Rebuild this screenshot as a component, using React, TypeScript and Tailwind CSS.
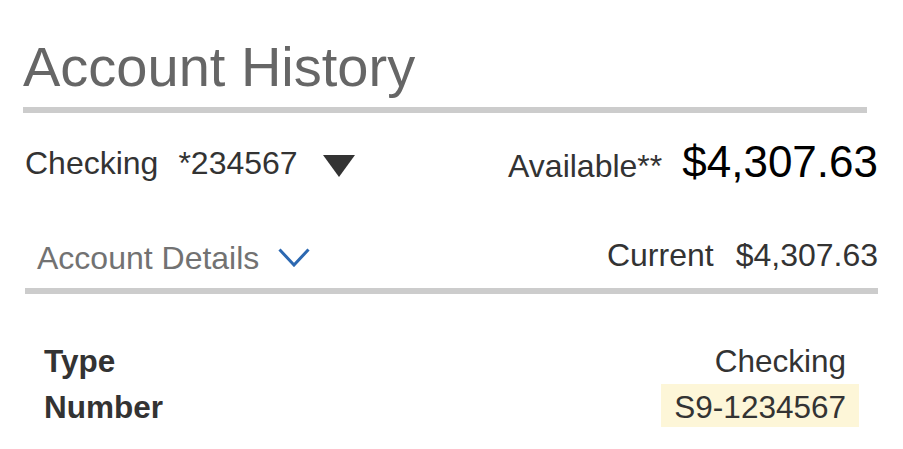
import React from 'react';

const font = { fontFamily: '"Liberation Sans", Arial, sans-serif' };

const CaretDown: React.FC = () => (
  <svg width="32" height="22" viewBox="0 0 32 22" className="block shrink-0">
    <path d="M0 0 H32 L16 22 Z" fill="#333333" />
  </svg>
);

const Chevron: React.FC = () => (
  <svg width="32" height="19" viewBox="0 0 32 19" className="block shrink-0">
    <path d="M1.5 1.5 L16 17 L30.5 1.5" fill="none" stroke="#2c68b1" strokeWidth={3} />
  </svg>
);

const DetailRow: React.FC<{ label: string; value: string; highlight?: boolean }> = ({ label, value, highlight }) => (
  <div className="flex justify-between items-start">
    <span className="text-[31.5px] leading-none pt-[7.5px] pb-[4px] font-bold text-[#333333]">{label}</span>
    <span
      className={`text-[31.5px] leading-none pt-[7.5px] pb-[4px] px-[13px] text-[#333333] ${highlight ? 'bg-[#fdf6d8]' : ''}`}
    >
      {value}
    </span>
  </div>
);

export default function App() {
  return (
    <div className="bg-white min-h-screen w-[903px] h-[449px] overflow-hidden" style={font}>
      <div className="ml-[23px] w-[855px] pt-[39px]">
        <h1 className="text-[56px] leading-none text-[#666666] font-normal">Account History</h1>
        <div className="mt-[12px] h-[6px] w-[844px] bg-[#cccccc]" />

        {/* account selector + available balance */}
        <div className="mt-[27px] flex justify-between items-start">
          <div className="mt-[7px] pl-[2px] flex items-start text-[32px] leading-none text-[#333333]">
            <span>Checking</span>
            <span className="ml-[20px]">*234567</span>
            <span className="ml-[25px] mt-[8px]">
              <CaretDown />
            </span>
          </div>
          <div className="flex items-baseline">
            <span className="text-[32px] leading-none text-[#333333]">Available**</span>
            <span className="ml-[20px] text-[44px] leading-none text-[#000000]">$4,307.63</span>
          </div>
        </div>

        {/* details toggle + current balance */}
        <div className="mt-[55px] flex justify-between items-start">
          <div className="flex items-start pl-[14px]">
            <span className="mt-[3px] text-[32px] leading-none text-[#727272]">Account Details</span>
            <span className="ml-[19px] mt-[9px]">
              <Chevron />
            </span>
          </div>
          <div className="flex items-baseline text-[32px] leading-none text-[#333333]">
            <span>Current</span>
            <span className="ml-[22px]">$4,307.63</span>
          </div>
        </div>
        <div className="mt-[14px] ml-[2px] h-[6px] bg-[#cccccc]" />

        <div className="mt-[44px] pl-[21px] pr-[19px] flex flex-col gap-[3px]">
          <DetailRow label="Type" value="Checking" />
          <DetailRow label="Number" value="S9-1234567" highlight />
        </div>
      </div>
    </div>
  );
}
